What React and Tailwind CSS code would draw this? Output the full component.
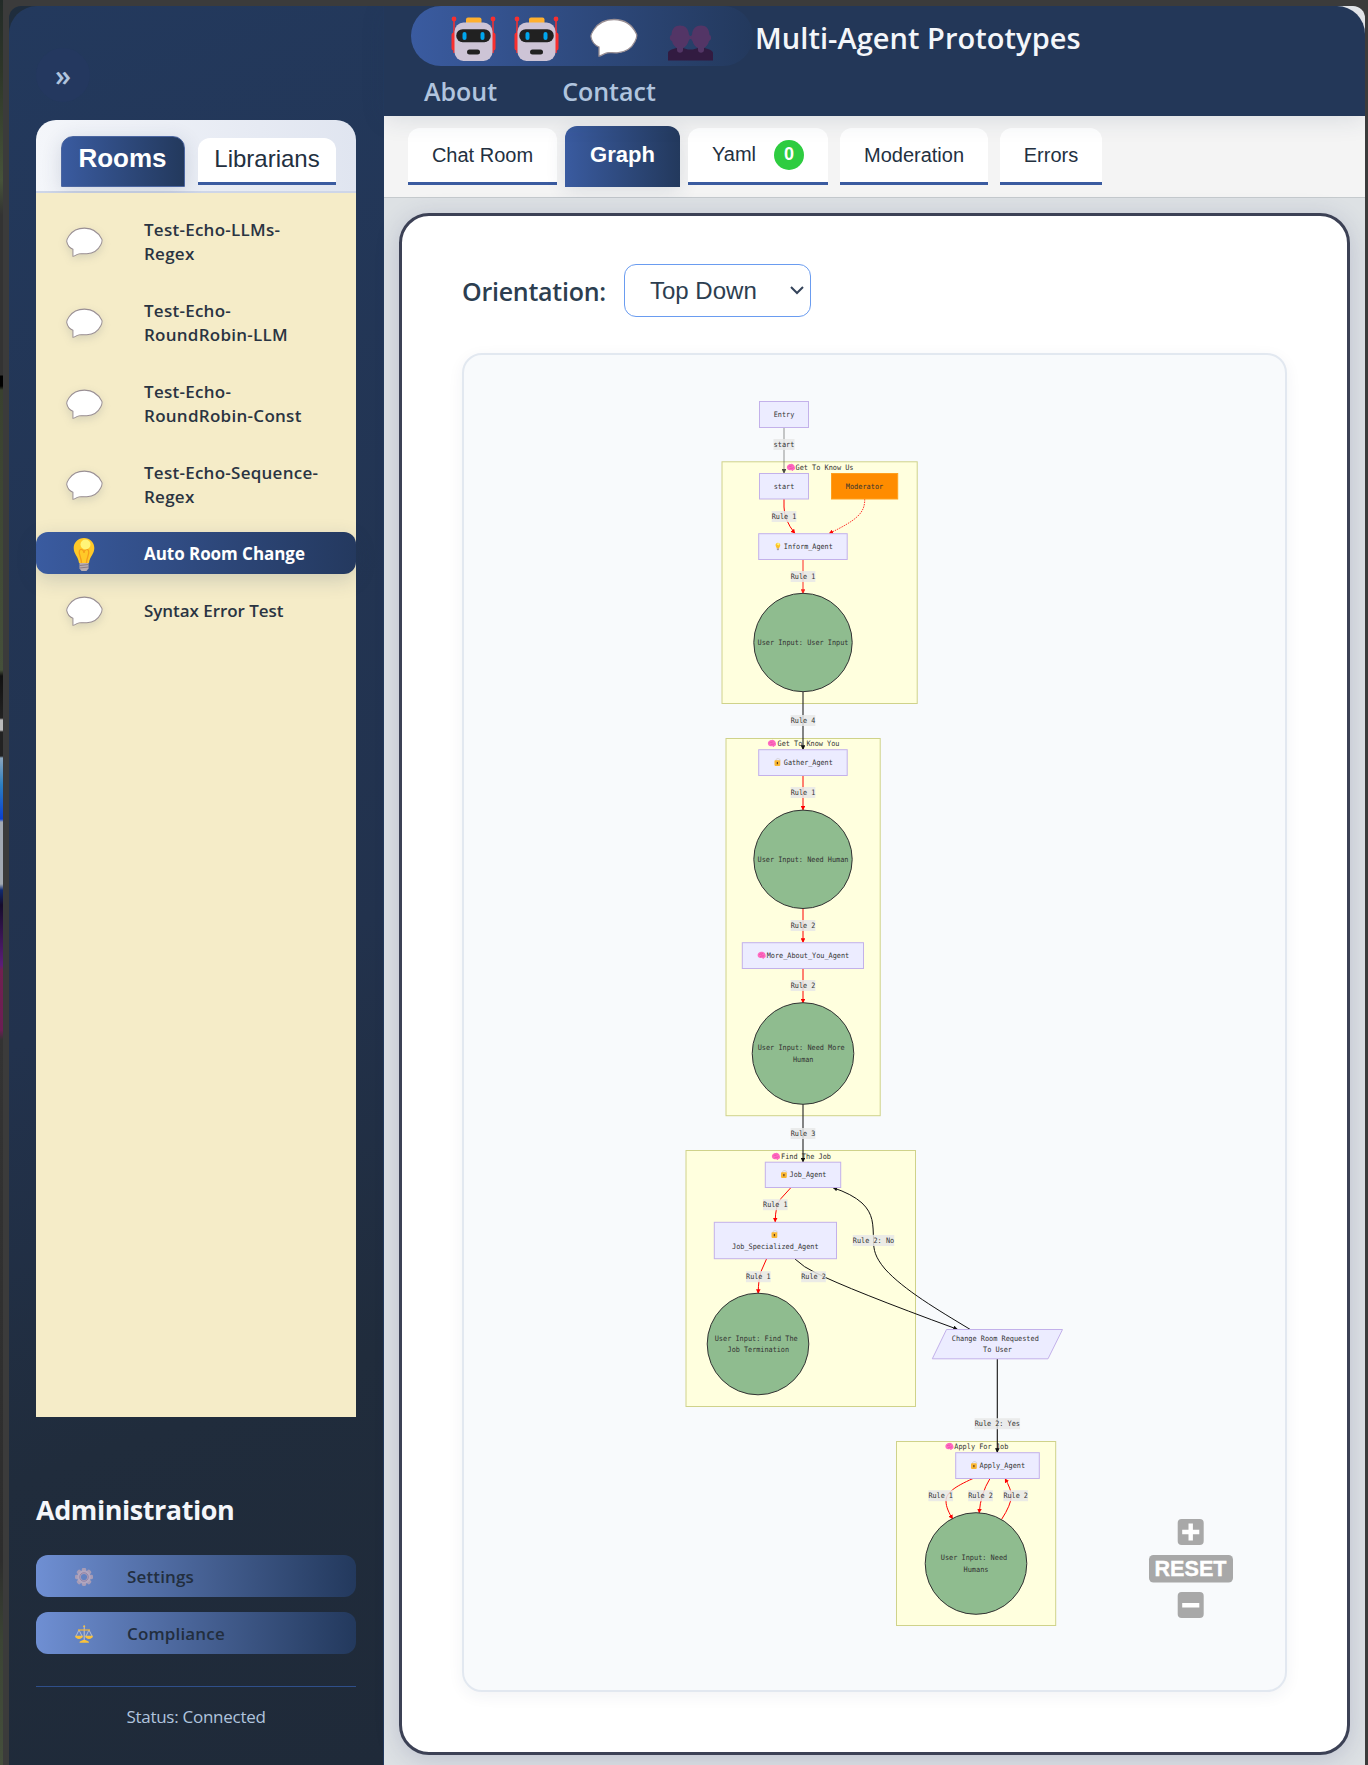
import React from 'react';

const UI = "font-['Open_Sans','Noto_Sans',sans-serif]";

function Bubble({ className }) {
  return (
    <svg viewBox="0 0 48 38" className={className}>
      <path d="M24 1C14 1 8 5 4 11C1.600 14.600.5 16.500 1 18.500C1.800 23 5.500 27 9 28.500V37.500C11 37.500 13 35.500 17 34.400C20 33.600 22 34.500 27 34.300C37 33.800 42 29 45 23C46.700 19.600 47.500 18 46.500 15.500C42 6 35 1 24 1Z" fill="#fff" stroke="#998f94" strokeWidth="1.300" />
    </svg>
  );
}

function Robot() {
  return (
    <svg viewBox="0 0 45 46" className="h-[46px] w-[45px]">
      <path d="M3 3v34M42 3v34" stroke="#f92f2f" strokeWidth="1.500" />
      <circle cx="3" cy="3" r="2.400" fill="#f92f2f" /><circle cx="42" cy="3" r="2.400" fill="#f92f2f" />
      <rect x="0.500" y="16.500" width="6" height="18" rx="2.500" fill="#f92f2f" /><rect x="38.500" y="16.500" width="6" height="18" rx="2.500" fill="#f92f2f" />
      <rect x="15" y="1.500" width="15.500" height="8" rx="2" fill="#ffb02e" />
      <rect x="3.500" y="6.500" width="38" height="38.500" rx="9" fill="#cdc4d6" />
      <rect x="5.200" y="13.200" width="34.600" height="13" rx="6.500" fill="#212121" />
      <rect x="11.500" y="16" width="4" height="8" rx="2" fill="#00a6ed" /><rect x="29.500" y="16" width="4" height="8" rx="2" fill="#00a6ed" />
      <rect x="16" y="33.500" width="13" height="5" rx="2.500" fill="#212121" />
    </svg>
  );
}

function People() {
  return (
    <svg viewBox="0 0 45 36" className="h-[36px] w-[45px]">
      <path d="M0 35.500V28C0 25.500 5 23.500 9 23H15C18 23.500 20 25 22.500 24.500C25 25 27 23.500 30 23H36C40 23.500 45 25.500 45 28V35.500Z" fill="#321b41" />
      <path d="M18 11h9v3h-9Z" fill="#533566" />
      <path d="M12 .5C7 .5 3.800 3.500 3.500 10C1.500 10 1 15.500 4 16C4.500 19 6.500 21.500 9 23V25C9 28.500 15 28.500 15 25V23C18 21.500 20 18.500 20.500 16C22 15.500 22.700 10 21 10C20.700 3.500 17 .5 12 .5Z" fill="#533566" />
      <path d="M33 .5C28 .5 24.300 3.500 24 10C22.300 10 23 15.500 24.500 16C25 18.500 27 21.500 30 23V25C30 28.500 36 28.500 36 25V23C38.500 21.500 40.500 19 41 16C44 15.500 43.500 10 41.500 10C41.200 3.500 38 .5 33 .5Z" fill="#533566" />
    </svg>
  );
}

function BulbShapes() {
  return (
    <g>
      <path d="M11 1C5 1 .7 5.500.7 11C.7 17 5 19 6 26H16C17 19 21.300 17 21.300 11C21.300 5.500 17 1 11 1Z" fill="#ffc928" />
      <path d="M8.500 26C8.500 20 5 17 6.500 13.500C8 11 11 13 11 16C11 13 14 11 15.500 13.500C17 17 13.500 20 13.500 26" fill="none" stroke="#f59f1d" strokeWidth="1.300" />
      <circle cx="12.500" cy="7.500" r="5" fill="#fff478" />
      <path d="M6.500 26h9v5.500L13.500 34h-5L6.500 31.500Z" fill="#b8adb0" />
      <path d="M6.500 28.500l9 -1M6.500 31l9 -1" stroke="#7d7077" strokeWidth=".8" />
    </g>
  );
}

function Bulb() {
  return <svg viewBox="0 0 22 35" className="h-[35px] w-[22px]"><BulbShapes /></svg>;
}

const teeth = [0, 45, 90, 135, 180, 225, 270, 315];
function Gear() {
  return (
    <svg viewBox="0 0 18 18" className="size-[18px]">
      {teeth.map((a) => <rect key={a} x="6.800" y="0" width="4.400" height="5" rx="1.400" fill="#a79cb6" transform={`rotate(${a} 9 9)`} />)}
      <circle cx="9" cy="9" r="4.900" fill="none" stroke="#b1a6bf" strokeWidth="3.600" />
      <circle cx="9" cy="9" r="4.200" fill="none" stroke="#8d7fa3" strokeWidth="1" />
    </svg>
  );
}

function Scale() {
  return (
    <svg viewBox="0 0 18 18" className="size-[18px]">
      <path d="M1 11L4 5L7 11M11 11L14 5L17 11" fill="none" stroke="#c9ccd6" strokeWidth=".8" />
      <path d="M9.200 1v15" stroke="#c8c5cc" strokeWidth="1" />
      <path d="M3 5H15" stroke="#f5b832" strokeWidth="1.200" />
      <circle cx="9.200" cy="1.200" r="1" fill="#f9c23c" />
      <path d="M0 10.800H8C8 15 0 15 0 10.800ZM10 10.800H18C18 15 10 15 10 10.800ZM4.500 17.800C4.500 15.500 7 16 8 15H10.400C11.500 16 14 15.500 14 17.800Z" fill="#f9c23c" />
    </svg>
  );
}

const INK = '#333333';

function T({ x, y, w, children }) {
  return (
    <text x={x - w / 2} y={y + 2.4} textLength={w} lengthAdjust="spacingAndGlyphs" fontSize="7.4" fill={INK} className="font-['DejaVu_Sans_Mono','Liberation_Mono',monospace]">{children}</text>
  );
}
function Label({ x, y, w = 24.7, children }) {
  return (
    <g>
      <rect x={x - w / 2} y={y - 5.5} width={w} height={11} fill="#e8e8e8" fillOpacity=".85" />
      <T x={x} y={y} w={w - 0.2}>{children}</T>
    </g>
  );
}
function Box({ x, y, x2, y2, fill = '#ececff', stroke = '#c3b1ea' }) {
  return <rect x={x} y={y} width={x2 - x} height={y2 - y} fill={fill} stroke={stroke} strokeWidth="1" />;
}
function Cluster(p) {
  return <Box {...p} fill="#ffffde" stroke="#cfd28a" />;
}
function Circ({ x, y, r }) {
  return <circle cx={x} cy={y} r={r} fill="#8fbc8f" stroke="#333" strokeWidth="1" />;
}
function Brain({ x, y }) {
  return (
    <g transform={`translate(${x} ${y})`}>
      <path d="M-4 .5C-4.500-2-2.500-3.700 0-3.600C2.500-4 4 -1.500 4 .5C4.300 2 3 2.600 2.300 2.600C2.300 4 .8 3.800 .3 2.500C-2 3.500-4 2-4 .5Z" fill="#ff6ac1" />
      <path d="M-2.500-.5C-1-2.500 0 0 1-2M-1.500 1.500C0 0 1.500 1.500 2.500 0" fill="none" stroke="#e0409b" strokeWidth=".6" />
    </g>
  );
}
function Lock({ x, y }) {
  return (
    <g transform={`translate(${x} ${y})`}>
      <path d="M-1.500-1V-2.500C-1.500-4.500 2.500-4.500 3-2" fill="none" stroke="#d5d3d8" strokeWidth="1" />
      <rect x="-3" y="-2.200" width="5.800" height="5.600" rx=".8" fill="#fab732" />
      <path d="M-.1 -.500V1.800" stroke="#5b3a20" strokeWidth="1.200" />
    </g>
  );
}
function Edge({ d, c = 'red', w = 1, dash, o }) {
  return <path d={d} fill="none" stroke={c} strokeWidth={w} strokeDasharray={dash} opacity={o} markerEnd={c === 'red' ? 'url(#tipRed)' : 'url(#tipBlack)'} />;
}

function Diagram() {
  return (
    <svg viewBox="464 355 821 1335" className="h-[1335px] w-[821px]">
      <defs>
        <marker id="tipRed" viewBox="0 0 6 6" refX="5.500" refY="3" markerWidth="4.600" markerHeight="4.600" markerUnits="userSpaceOnUse" orient="auto"><path d="M0 0L6 3L0 6Z" fill="red" /></marker>
        <marker id="tipBlack" viewBox="0 0 6 6" refX="5.500" refY="3" markerWidth="4.600" markerHeight="4.600" markerUnits="userSpaceOnUse" orient="auto"><path d="M0 0L6 3L0 6Z" fill="#111" /></marker>
      </defs>
      <Cluster x={722} y={461.8} x2={917.2} y2={703.5} />
      <Cluster x={726} y={738.5} x2={880.2} y2={1115.7} />
      <Cluster x={686} y={1150.5} x2={915.5} y2={1406.5} />
      <Cluster x={896.5} y={1441.5} x2={1055.7} y2={1625.5} />
      <Brain x={791} y={467.5} /><T x={824.5} y={467.5} w={58}>Get To Know Us</T>
      <Brain x={772} y={743.5} /><T x={808.5} y={743.5} w={62}>Get To Know You</T>
      <Brain x={776} y={1156.5} /><T x={806} y={1156.5} w={50}>Find The Job</T>
      <Brain x={949.5} y={1446.5} /><T x={981.3} y={1446.5} w={54}>Apply For Job</T>

      <Edge d="M784 427.500V473.300" c="#333" w={0.7} o={0.75} />
      <Edge d="M784 499V507Q784 520 795 533.500" />
      <Edge d="M864.700 499C865 513 857 520 829 533.500" dash="1.500 1" w={0.8} />
      <Edge d="M803 559.500V593.500" o={0.85} />
      <Edge d="M803 692V749.500" c="#222" w={1.1} />
      <Edge d="M803 775.500V810" />
      <Edge d="M803 908.500V942.500" />
      <Edge d="M803 968.500V1003" />
      <Edge d="M803 1104V1162" c="#222" w={1.1} />
      <Edge d="M791 1187.500L781 1198.500Q775.300 1205 775.200 1222" />
      <Edge d="M766.500 1259L761 1271.500Q758.400 1279 758.200 1293.500" />
      <Edge d="M795 1259Q804 1267.500 815 1272.500Q850 1290 957.500 1329.300" c="#111" />
      <Edge d="M970 1329.300C938 1310 904 1290 885 1269C875 1257 873.500 1250 873.500 1240C873 1224 873.500 1214 862 1203Q852 1194 833 1187.700" c="#111" />
      <Edge d="M997.300 1359V1452.500" c="#111" w={1.1} />
      <Edge d="M973 1478.500C954 1487 946 1493 946 1501C946 1507 949 1513 952.700 1519" />
      <Edge d="M990 1478.500Q980.500 1494 979.200 1513" />
      <Edge d="M1001.500 1519.500Q1011 1505 1011.500 1495.500Q1011 1489 1005 1478.500" />

      <Box x={759.5} y={401.5} x2={808.5} y2={427.5} /><T x={784} y={414.5} w={20.5}>Entry</T>
      <Box x={759.5} y={473.5} x2={808.5} y2={499} /><T x={784} y={486.5} w={20.5}>start</T>
      <Box x={831.5} y={473.5} x2={897.7} y2={499} fill="#ff8c00" stroke="#ffa01f" /><T x={864.5} y={486.5} w={37.5}>Moderator</T>
      <Box x={758.7} y={533.7} x2={847.2} y2={559.5} />
      <g transform="translate(775.400 542.500) scale(.23)"><BulbShapes /></g>
      <T x={808.3} y={546.5} w={49}>Inform_Agent</T>
      <Circ x={803} y={642.5} r={49.2} /><T x={803} y={642.5} w={91}>User Input: User Input</T>
      <Box x={758.7} y={749.7} x2={847.2} y2={775.5} /><Lock x={777.5} y={762.5} /><T x={808.3} y={762.5} w={49}>Gather_Agent</T>
      <Circ x={803} y={859.3} r={49.2} /><T x={803} y={859.3} w={91}>User Input: Need Human</T>
      <Box x={742.3} y={942.7} x2={863.5} y2={968.5} /><Brain x={761.7} y={955.3} /><T x={808} y={955.5} w={82.5}>More_About_You_Agent</T>
      <Circ x={803} y={1053.5} r={50.8} /><T x={801.2} y={1047.5} w={87}>User Input: Need More</T><T x={803.2} y={1059.5} w={20.5}>Human</T>
      <Box x={765.3} y={1162.2} x2={840.7} y2={1187.5} /><Lock x={784} y={1174.5} /><T x={808} y={1174.5} w={36.8}>Job_Agent</T>
      <Box x={714.3} y={1222.3} x2={836.5} y2={1258.7} /><Lock x={774.5} y={1234.5} /><T x={775.3} y={1246.5} w={86.5}>Job_Specialized_Agent</T>
      <Circ x={758} y={1344} r={50.8} /><T x={756.2} y={1338.5} w={83}>User Input: Find The</T><T x={758.3} y={1349.5} w={61.5}>Job Termination</T>
      <path d="M946.500 1329.500H1062.500L1048 1358.800H932.300Z" fill="#ececff" stroke="#c3b1ea" /><T x={995.3} y={1338.5} w={87}>Change Room Requested</T><T x={997.5} y={1349.5} w={29}>To User</T>
      <Box x={955.7} y={1452.7} x2={1039.3} y2={1478.5} /><Lock x={974} y={1465.5} /><T x={1002.3} y={1465.5} w={45.5}>Apply_Agent</T>
      <Circ x={976} y={1563.5} r={50.8} /><T x={974} y={1557.5} w={66.5}>User Input: Need</T><T x={976} y={1569.5} w={25}>Humans</T>

      <Label x={784} y={444.5} w={21}>start</Label>
      <Label x={784} y={516.5}>Rule 1</Label>
      <Label x={803} y={576.5}>Rule 1</Label>
      <Label x={803} y={720.5}>Rule 4</Label>
      <Label x={803} y={792.5}>Rule 1</Label>
      <Label x={803} y={925.5}>Rule 2</Label>
      <Label x={803} y={985.5}>Rule 2</Label>
      <Label x={803} y={1133.5}>Rule 3</Label>
      <Label x={775.3} y={1204.7}>Rule 1</Label>
      <Label x={873.5} y={1240.5} w={41.5}>Rule 2: No</Label>
      <Label x={758.3} y={1276.7}>Rule 1</Label>
      <Label x={813.5} y={1276.7}>Rule 2</Label>
      <Label x={997.3} y={1423.7} w={45.5}>Rule 2: Yes</Label>
      <Label x={940.7} y={1495.7}>Rule 1</Label>
      <Label x={980.5} y={1495.7}>Rule 2</Label>
      <Label x={1015.7} y={1495.7}>Rule 2</Label>

      <g fill="#a8a8a8">
        <rect x="1177.700" y="1519" width="26" height="26" rx="4" />
        <rect x="1149" y="1555" width="84" height="27.500" rx="4.500" />
        <rect x="1177.700" y="1592" width="26" height="26" rx="4" />
      </g>
      <path d="M1182.200 1532H1199.300M1190.700 1523.500V1540.500M1182.200 1605.200H1199.300" stroke="#fff" strokeWidth="4.400" />
      <text x="1154.500" y="1576.300" textLength="72" lengthAdjust="spacingAndGlyphs" fontSize="22.500" fontWeight="700" fill="#fff" stroke="#fff" strokeWidth=".4" className="font-['Liberation_Sans',sans-serif]">RESET</text>
    </svg>
  );
}

const rooms = [
  { lines: ['Test-Echo-LLMs-', 'Regex'], tracking: 'tracking-[0.260px]' },
  { lines: ['Test-Echo-', 'RoundRobin-LLM'], tracking: 'tracking-[0.260px]' },
  { lines: ['Test-Echo-', 'RoundRobin-Const'], tracking: 'tracking-[0.280px]' },
  { lines: ['Test-Echo-Sequence-', 'Regex'], tracking: 'tracking-[0.260px]' },
  { lines: ['Auto Room Change'], tracking: 'tracking-[-0.050px]' },
  { lines: ['Syntax Error Test'], tracking: 'tracking-[-0.050px]' },
];

function Room({ lines, tracking, active }) {
  return (
    <div className={`flex items-center rounded-[12px] pt-[10px] pb-[8px] leading-6 ${active ? 'relative z-10 h-[42px] bg-linear-to-r from-[#3a5ba0] to-[#24395f] text-white shadow-[0_6px_20px_rgba(35,57,93,0.18)]' : 'text-[#2a3442]'}`}>
      <div className="-my-2 flex w-24 shrink-0 justify-center">
        {active ? <Bulb /> : <Bubble className="h-[30px] w-[37px] drop-shadow-[0_3px_4px_rgba(35,57,93,0.14)]" />}
      </div>
      <div className={`ml-3 whitespace-nowrap text-[17px] ${active ? 'font-bold' : 'font-semibold'} ${tracking}`}>
        {lines.map((l) => <div key={l}>{l}</div>)}
      </div>
    </div>
  );
}

function AdminButton({ icon, children }) {
  return (
    <div className="flex h-[42px] items-center rounded-[12px] bg-linear-to-r from-[#6f8fd3] to-[#23395d] text-[17px] font-semibold text-[#222e3e]">
      <div className="flex w-24 justify-center pt-[2px]">{icon}</div>
      <div className="-ml-[5px] pt-[2px] tracking-[0.150px]">{children}</div>
    </div>
  );
}

function Sidebar() {
  return (
    <aside className="flex h-[1759px] w-[375px] shrink-0 flex-col rounded-tl-[28px] border-r border-[#23395d] bg-[linear-gradient(160deg,#23395d_0%,#22324d_55%,#202c3c_78%,#1f2a39_100%)] px-[27px]">
      <div className="mt-[42px] flex size-[54px] items-center justify-center rounded-full bg-[#24385f] pb-[1px] text-[29px] font-semibold text-[#b0c4de]">»</div>
      <div className="mt-[18px] flex h-[73px] w-[320px] shrink-0 gap-[13px] rounded-t-[20px] border-b-2 border-[#ced6e8] bg-linear-to-r from-[#f4f6fa] to-[#e0e5f0] pl-[25px] font-['Liberation_Sans',sans-serif] text-[24px]">
        <div className="mt-[16px] flex h-[51px] w-[124px] items-center justify-center rounded-t-[12px] border border-[#4c66a0] bg-linear-to-r from-[#3a5ba0] to-[#23395d] pr-[1px] pb-[6px] text-[26px] font-bold text-white shadow-[0_4px_20px_rgba(35,57,93,0.16)]">Rooms</div>
        <div className="mt-[18px] flex h-[47px] w-[138px] items-center justify-center rounded-t-[12px] border-b-3 border-[#3a5ba0] bg-white pb-[2px] text-[#23303f]">Librarians</div>
      </div>
      <div className="flex h-[1224px] w-[320px] shrink-0 flex-col gap-[15px] bg-[#f5ecc8] pt-[15px]">
        {rooms.map((r, i) => <Room key={i} lines={r.lines} tracking={r.tracking} active={i === 4} />)}
      </div>
      <div className="mt-[75px] h-[36px] text-[27px] leading-[36px] font-bold tracking-[-0.450px] text-[#f4f6fa]">Administration</div>
      <div className="mt-[27px] flex w-[320px] flex-col gap-[15px]">
        <AdminButton icon={<Gear />}>Settings</AdminButton>
        <AdminButton icon={<Scale />}>Compliance</AdminButton>
      </div>
      <div className="mt-[32px] w-[320px] border-t border-[#2f4f8a] pt-[18px] text-center text-[17px] leading-6 tracking-[-0.270px] text-[#b0c4de]">Status: Connected</div>
    </aside>
  );
}

function Tab({ className, children }) {
  return <div className={`mt-[12px] flex h-[57px] items-center justify-center rounded-t-[12px] border-b-3 border-[#3a5ba0] bg-white text-[#23303f] ${className}`}>{children}</div>;
}

export default function App() {
  return (
    <div className={`flex h-[1765px] w-[1368px] overflow-hidden bg-[#3b3b3b] ${UI}`}>
      <div className="w-[3px] shrink-0 bg-[linear-gradient(180deg,#232b28_0px,#2d3628_70px,#465339_180px,#333_215px,#333_375px,#000_376px,#000_386px,#39412f_390px,#45503a_670px,#111_676px,#222_718px,#bbb_720px,#bbb_730px,#222_732px,#222_756px,#8aa5bd_758px,#2c7fc0_785px,#0a3fd0_819px,#a3aab3_822px,#a3aab3_884px,#102a70_890px,#150c2c_905px,#5b1d78_965px,#702050_970px,#6c1e54_1030px,#333_1040px,#2d2d2d_1560px,#3b4434_1640px,#454f3c_1765px)]" />
      <div className="mt-[6px] ml-[6px] flex h-[1759px] w-[1356px] overflow-hidden rounded-t-[12px] bg-[linear-gradient(90deg,#1f2d3d_0px,#1f2d3d_200px,#d8dde3_600px,#e8eaee_100%)]">
        <Sidebar />
        <main className="flex w-[981px] flex-col">
          <header className="relative z-10 h-[110px] shrink-0 rounded-tr-[28px] bg-[#233758] pl-[27px] shadow-[0_4px_24px_rgba(35,57,93,0.12)]">
            <div className="flex h-[60px] items-center">
              <div className="flex h-[60px] w-[342px] shrink-0 items-center rounded-[30px] bg-linear-to-r from-[#3a5ba0] to-[#23395d] pt-[5px] pl-[40px]">
                <Robot />
                <div className="w-[18px]" />
                <Robot />
                <div className="w-[31px]" />
                <div className="pb-[2px]"><Bubble className="h-[39px] w-[48px]" /></div>
                <div className="w-[30px]" />
                <div className="pt-[8px]"><People /></div>
              </div>
              <div className="ml-[2px] whitespace-nowrap pt-[4px] text-[29px] font-semibold tracking-[0.050px] text-[#f4f6fa]">Multi-Agent Prototypes</div>
            </div>
            <div className="flex gap-[65px] pl-[13px] text-[25px] leading-[50px] font-semibold text-[#b0c4de]">
              <span>About</span><span>Contact</span>
            </div>
          </header>
          <nav className="flex h-[82px] shrink-0 border-b border-[#c5cacd] bg-[#f4f4f4] pl-[24px] font-['Liberation_Sans',sans-serif] text-[20px]">
            <Tab className="w-[149px]">Chat Room</Tab>
            <div className="mt-[10px] ml-[8px] flex h-[61px] w-[115px] items-center justify-center rounded-t-[12px] bg-linear-to-r from-[#3a5ba0] to-[#23395d] pb-[4px] text-[22px] font-bold text-white shadow-[0_4px_20px_rgba(35,57,93,0.12)]">Graph</div>
            <Tab className="ml-[8px] w-[140px]">
              <span className="-mt-[3px]">Yaml</span>
              <span className="ml-[18px] -mt-px flex size-[30px] items-center justify-center rounded-full bg-[#2ecc40] text-[18px] font-bold text-white">0</span>
            </Tab>
            <Tab className="ml-[12px] w-[148px]">Moderation</Tab>
            <Tab className="ml-[12px] w-[102px]">Errors</Tab>
          </nav>
          <section className="h-[1567px] bg-[#dde1e4] pt-[15px] pl-[15px]">
            <div className="h-[1542px] w-[951px] rounded-[30px] border-3 border-[#3c4155] bg-white pl-[60px] shadow-[0_4px_24px_rgba(60,65,120,0.2)]">
              <div className="mt-[48px] flex h-[53px] items-center">
                <div className="w-[162px] pt-[2px] text-[25px] font-semibold tracking-[-0.250px] whitespace-nowrap text-[#2c3e50]">Orientation:</div>
                <div className="flex h-[53px] w-[187px] items-center justify-between rounded-[12px] border border-[#6a9cf0] pr-[6px] pl-[25px] font-['Liberation_Sans',sans-serif] text-[24px] text-[#2c3e50]">
                  <span className="whitespace-nowrap">Top Down</span>
                  <svg viewBox="0 0 14 9" className="h-[9px] w-[14px]"><path d="M1 1L7 7L13 1" fill="none" stroke="#34435a" strokeWidth="2" /></svg>
                </div>
              </div>
              <div className="mt-[36px] h-[1339px] w-[825px] overflow-hidden rounded-[20px] border-2 border-[#e2e8f0] bg-[#f8fafc] shadow-[0_4px_16px_rgba(35,57,93,0.06)]">
                <Diagram />
              </div>
            </div>
          </section>
        </main>
      </div>
    </div>
  );
}
